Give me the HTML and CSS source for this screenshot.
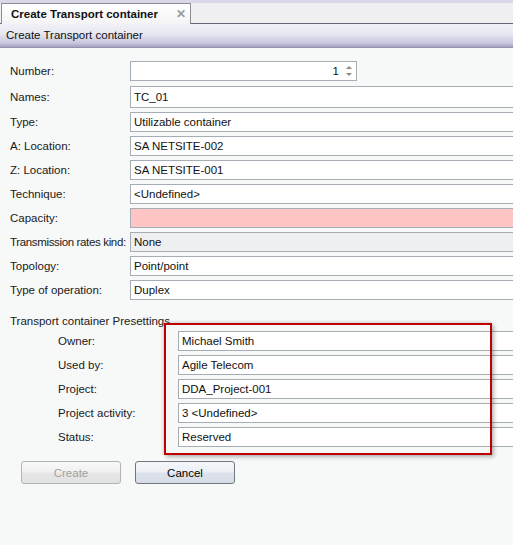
FILE: index.html
```
<!DOCTYPE html>
<html>
<head>
<meta charset="utf-8">
<link rel="stylesheet" href="styles.css">
</head>
<body>
<div class="tabstrip">
  <div class="tab"><span class="tab-title">Create Transport container</span><span class="tab-close">✕</span></div>
</div>
<div class="titlebar">Create Transport container</div>
<div class="form">
  <div class="row row-number"><label>Number:</label><div class="field field-number"><span class="num">1</span><span class="spin"><span class="up"></span><span class="down"></span></span></div></div>
  <div class="row row-tall"><label>Names:</label><div class="field field-tall">TC_01</div></div>
  <div class="row"><label>Type:</label><div class="field">Utilizable container</div></div>
  <div class="row"><label>A: Location:</label><div class="field">SA NETSITE-002</div></div>
  <div class="row"><label>Z: Location:</label><div class="field">SA NETSITE-001</div></div>
  <div class="row"><label>Technique:</label><div class="field">&lt;Undefined&gt;</div></div>
  <div class="row"><label>Capacity:</label><div class="field field-error"></div></div>
  <div class="row"><label class="label-tight">Transmission rates kind:</label><div class="field field-readonly">None</div></div>
  <div class="row"><label>Topology:</label><div class="field">Point/point</div></div>
  <div class="row"><label>Type of operation:</label><div class="field">Duplex</div></div>

  <div class="section">
    <div class="section-title">Transport container Presettings</div>
    <div class="sub-rows">
      <div class="row sub"><label>Owner:</label><div class="field">Michael Smith</div></div>
      <div class="row sub"><label>Used by:</label><div class="field">Agile Telecom</div></div>
      <div class="row sub"><label>Project:</label><div class="field">DDA_Project-001</div></div>
      <div class="row sub"><label>Project activity:</label><div class="field">3 &lt;Undefined&gt;</div></div>
      <div class="row sub"><label>Status:</label><div class="field">Reserved</div></div>
    </div>
    <div class="highlight"></div>
  </div>

  <div class="buttons">
    <button class="btn btn-disabled">Create</button>
    <button class="btn">Cancel</button>
  </div>
</div>
</body>
</html>
```
FILE: styles.css
```
html, body {
  margin: 0;
  padding: 0;
}
body {
  width: 513px;
  height: 545px;
  overflow: hidden;
  background: #f7f8f8;
  font-family: "Liberation Sans", Arial, sans-serif;
  font-size: 11.5px;
  color: #1a1a1a;
}
.tabstrip {
  height: 20px;
  border-top: 3px solid #d8d8e8;
  border-bottom: 1px solid #646474;
  background: #f0f0f2;
  display: flex;
  align-items: flex-end;
}
.tab {
  margin-left: 1px;
  margin-bottom: -1px;
  width: 190px;
  height: 21px;
  border: 1px solid #8c8c94;
  border-bottom: none;
  background: linear-gradient(#ffffff, #f4f4f6);
  display: flex;
  align-items: center;
  box-sizing: border-box;
  padding-left: 9px;
  white-space: nowrap;
}
.tab-title {
  font-weight: bold;
  color: #111;
  font-size: 11.5px;
}
.tab-close {
  margin-left: auto;
  margin-right: 4px;
  color: #9a9a9a;
  font-size: 12px;
  font-weight: bold;
}
.titlebar {
  height: 24px;
  box-sizing: border-box;
  padding-left: 6px;
  line-height: 23px;
  background: linear-gradient(#f0f0f6 0%, #e8e8f2 40%, #c8c6dc 80%, #a39fbf 96%, #86839e 100%);
  color: #111;
}
.form {
  padding: 13px 0 0 10px;
}
.row {
  display: flex;
  align-items: center;
  height: 20px;
  margin-bottom: 4px;
}
.row-number {
  margin-bottom: 5px;
}
.row-tall {
  height: 22px;
}
.row label {
  width: 120px;
  flex: none;
  white-space: nowrap;
}
.row label.label-tight {
  letter-spacing: -0.35px;
}
.field {
  flex: 1;
  min-width: 0;
  height: 20px;
  box-sizing: border-box;
  border: 1px solid #a6adb5;
  border-right: none;
  background: #fff;
  padding-left: 3px;
  line-height: 18px;
  color: #111;
  white-space: nowrap;
  overflow: hidden;
}
.field-tall {
  height: 22px;
  line-height: 20px;
}
.field-error {
  background: #ffc4c4;
}
.field-readonly {
  background: #eeeff1;
}
.field-number {
  flex: none;
  width: 227px;
  border-right: 1px solid #a6adb5;
  display: flex;
  justify-content: flex-end;
  align-items: center;
  padding-right: 4px;
}
.num {
  margin-right: 7px;
}
.spin {
  display: flex;
  flex-direction: column;
  gap: 4px;
}
.spin .up {
  width: 0;
  height: 0;
  border-left: 3px solid transparent;
  border-right: 3px solid transparent;
  border-bottom: 3px solid #8a8a8a;
}
.spin .down {
  width: 0;
  height: 0;
  border-left: 3px solid transparent;
  border-right: 3px solid transparent;
  border-top: 3px solid #8a8a8a;
}
.section {
  position: relative;
  margin-top: 14px;
}
.section-title {
  height: 14px;
  line-height: 14px;
  margin-bottom: 3px;
}
.sub-rows {
  padding-left: 48px;
}
.row.sub label {
  width: 120px;
}
.highlight {
  position: absolute;
  left: 154px;
  top: 9px;
  width: 328px;
  height: 132px;
  box-sizing: border-box;
  border: 2px solid #c00000;
  box-shadow: 2px 2px 4px rgba(0,0,0,0.28), -1px -1px 3px rgba(0,0,0,0.12);
  pointer-events: none;
}
.buttons {
  display: flex;
  gap: 14px;
  padding-left: 11px;
  margin-top: 14px;
}
.btn {
  width: 100px;
  height: 23px;
  box-sizing: border-box;
  border: 1px solid #707880;
  border-radius: 3px;
  background: linear-gradient(#f4f6fa 0%, #eceff4 45%, #dde2ea 55%, #d6dce6 100%);
  font-family: inherit;
  font-size: 11.5px;
  color: #000;
  padding: 0;
}
.btn-disabled {
  border-color: #b0b4b8;
  background: linear-gradient(#f8f8f8 0%, #f2f2f2 45%, #e6e6e6 55%, #e2e2e2 100%);
  color: #a0a0a0;
}
```
